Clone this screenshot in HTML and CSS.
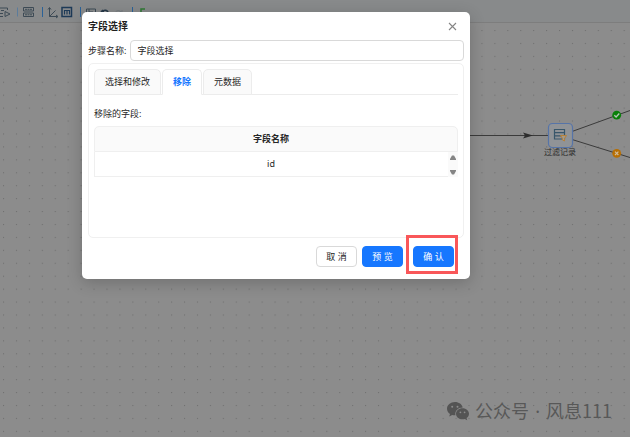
FILE: index.html
```html
<!DOCTYPE html>
<html lang="zh-CN">
<head>
<meta charset="utf-8">
<title>字段选择</title>
<link rel="stylesheet" href="styles.css">
</head>
<body>
<div class="workspace">
  <header class="toolbar" aria-hidden="true">
    <svg width="160" height="22" viewBox="0 0 160 22" fill="none" stroke="#3d4a55">
      <path d="M0 8H7.500V10M1 10.500h3M0 16.500H3M0 13.500h3M5 11.500v5l5-2.500z"/>
      <path d="M17.500 7.500v9" stroke="#5b7c9c"/>
      <path d="M23.500 7.500h10v3.500h-10zM23.500 13h10v3.500h-10z"/>
      <path d="M25 9.300h7M25 14.800h7" stroke-dasharray="2 .5"/>
      <path d="M42.500 7v10M80.500 7v10M132.500 7v10" stroke="#2b6298"/>
      <path d="M49.500 8v8.500h8M49.500 16.500l6-6M48 9.500l1.500-2 1.500 2M56 15l2 1.500-2 1.500"/>
      <path d="M62 7.500h9.500v9H62z" stroke="#1d3a57" stroke-width="1.500"/>
      <path d="M64.500 14.500v-4h5v4M67 10.500v4" stroke="#1d3a57" stroke-width="1.200"/>
      <path d="M86.500 17v-8h9v8M89 9v3h4"/>
      <path d="M101 12l2-2M101 12h3M102 12c2-3 6-2 6 1" stroke="#26394a" stroke-width="1.500"/>
      <path d="M115 13c1-3 5-3 6-1M122 10v2h-3" stroke="#747b80"/>
      <path d="M145 9h-4v5h3" stroke="#2f7a35" stroke-width="1.500"/>
    </svg>
  </header>
  <main class="canvas">
    <svg class="grid" width="100%" height="100%" aria-hidden="true">
      <defs>
        <pattern id="dots" x="3" y="7" width="12.930" height="12.930" patternUnits="userSpaceOnUse">
          <rect width="1.100" height="1.100" fill="#707070"/>
        </pattern>
      </defs>
      <rect width="100%" height="100%" fill="url(#dots)"/>
    </svg>
    <svg class="flow" width="170" height="70" viewBox="460 100 170 70" fill="none" aria-hidden="true">
      <path d="M460 135.500H548M572 131.500L630 110.500M572 139.500L630 157.500" stroke="#3b3b3b"/>
      <path d="M523 132.500l10 3-10 3 2-3z" fill="#2d2d2d"/>
      <rect x="548.500" y="123.500" width="24" height="24" rx="4" fill="#909397" stroke="#5674a8" stroke-width="1.200"/>
      <path d="M554.500 129.500h10v9.500h-10zM554.500 132.700h10M554.500 135.900h10" stroke="#38566a" stroke-width="1.200"/>
      <path d="M560.500 135.500h6l-2 3v2.500l-2-1v-1.500z" fill="#a39a8c" stroke="#b58038"/>
      <circle cx="616.700" cy="115.200" r="4.400" fill="#098009"/>
      <path d="M614.300 115.200l1.800 1.800 3.200-3.500" stroke="#b7c7b7" stroke-width="1.300"/>
      <circle cx="616.700" cy="153.300" r="4.400" fill="#b86f03"/>
      <path d="M615 151.600l3.400 3.400M618.400 151.600L615 155" stroke="#d0bb99" stroke-width="1.200"/>
    </svg>
    <span class="node-name">过滤记录</span>
    <div class="watermark">
      <svg width="24" height="20" viewBox="0 0 24 20" aria-hidden="true">
        <path fill="#545454" d="M9 1C4.500 1 1 4 1 7.700c0 2.100 1.200 4 3 5.200l-.8 2.500 3-1.500c1 .3 2 .4 3.200.4-.8-4.500 2.800-7.800 7.300-7.800C16 3.300 12.900 1 9 1z"/>
        <path fill="#545454" d="M16.500 7.200c-3.800 0-6.500 2.500-6.500 5.500s2.700 5.600 6.500 5.600c.8 0 1.600-.1 2.300-.4l2.400 1.300-.6-2.100c1.500-1 2.400-2.600 2.400-4.400 0-3-2.800-5.500-6.500-5.500z"/>
        <g fill="#8c8c8c"><circle cx="6.200" cy="5.800" r="1"/><circle cx="11.500" cy="5.800" r="1"/><circle cx="14.400" cy="11.300" r=".9"/><circle cx="18.600" cy="11.300" r=".9"/></g>
      </svg>
      <span>公众号 <span class="dot">·</span> 风息111</span>
    </div>
  </main>
</div>

<div class="overlay">
  <form class="dialog" role="dialog" aria-labelledby="dialog-title">
    <div class="dialog-head">
      <h1 id="dialog-title">字段选择</h1>
      <button type="button" class="close" aria-label="关闭">
        <svg width="9" height="9" viewBox="0 0 9 9"><path d="M1 1l7 7M8 1L1 8" stroke="#858585" stroke-width="1.100"/></svg>
      </button>
    </div>
    <div class="name-row">
      <label for="step-name">步骤名称:</label>
      <input id="step-name" type="text" value="字段选择">
    </div>
    <section class="card">
      <div class="tabs" role="tablist">
        <button type="button" role="tab" class="tab">选择和修改</button>
        <button type="button" role="tab" class="tab active" aria-selected="true">移除</button>
        <button type="button" role="tab" class="tab">元数据</button>
      </div>
      <p class="caption">移除的字段:</p>
      <div class="table-box">
        <table>
          <thead><tr><th>字段名称</th></tr></thead>
          <tbody><tr><td>id</td></tr></tbody>
        </table>
        <div class="scrollbar" aria-hidden="true">
          <svg width="6" height="5" viewBox="0 0 6 5"><path d="M0 4L2 .5h2L6 4v1H0z" fill="#858585"/></svg>
          <svg width="6" height="5" viewBox="0 0 6 5"><path d="M0 1l2 3.500h2L6 1V0H0z" fill="#858585"/></svg>
        </div>
      </div>
    </section>
    <footer class="actions">
      <button type="button" class="btn">取 消</button>
      <button type="button" class="btn primary">预 览</button>
      <span class="marked"><button type="submit" class="btn primary">确 认</button></span>
    </footer>
  </form>
</div>
</body>
</html>
```
FILE: styles.css
```css
* {
  box-sizing: border-box;
}

body {
  margin: 0;
  min-height: 100vh;
  display: grid;
  overflow: hidden;
  color: #262626;
  font: 9px/14px "Noto Sans", "Noto Sans CJK SC", sans-serif;
}

button,
input {
  font: inherit;
  color: inherit;
}

.workspace,
.overlay {
  grid-area: 1 / 1;
}

.workspace {
  display: flex;
  flex-direction: column;
  background: #8c8c8c;
}

.toolbar {
  height: 23px;
  background: #888a8b;
  border-bottom: 1px solid #7d7d7d;
}

.toolbar svg {
  display: block;
}

.canvas {
  position: relative;
  flex: 1;
}

.grid {
  position: absolute;
  inset: 0;
}

.flow {
  position: absolute;
  top: 77px;
  right: 0;
}

.node-name {
  position: absolute;
  top: 122px;
  right: 54px;
  font-size: 8px;
  color: #2b2b2b;
}

.watermark {
  position: absolute;
  right: 18px;
  bottom: 13px;
  display: flex;
  align-items: center;
  gap: 5px;
  font-family: "Noto Sans CJK SC", sans-serif;
  font-size: 18px;
  line-height: 26px;
  color: #585858;
}

.watermark .dot {
  margin: 0 2px;
  font-family: "Noto Sans", sans-serif;
}

.overlay {
  position: relative;
  padding: 12px 160px 0 82px;
}

.dialog {
  padding: 6px;
  padding-bottom: 5px;
  background: #fff;
  border-radius: 5px;
  box-shadow: 0 4px 16px rgba(0, 0, 0, 0.2);
}

.dialog-head {
  display: flex;
  align-items: center;
  justify-content: space-between;
  height: 16px;
  margin-bottom: 6px;
}

h1 {
  margin: 0;
  font-size: 10px;
  font-weight: 700;
  color: #1f1f1f;
}

.close {
  display: flex;
  padding: 0;
  margin-right: 7px;
  border: 0;
  background: none;
}

.name-row {
  display: flex;
  align-items: center;
  gap: 4px;
  margin-bottom: 2px;
}

.name-row input {
  flex: 1;
  min-width: 0;
  height: 21px;
  padding: 0 6px;
  border: 1px solid #d9d9d9;
  border-radius: 4px;
  background: #fff;
}

.card {
  min-height: 175px;
  padding: 5px;
  border: 1px solid #f0f0f0;
  border-radius: 5px;
}

.tabs {
  display: flex;
  gap: 1px;
  border-bottom: 1px solid #ececec;
}

.tab {
  height: 26px;
  padding: 0 10px;
  margin-bottom: -1px;
  border: 1px solid #ececec;
  border-radius: 5px 5px 0 0;
  background: #fafafa;
}

.tab.active {
  border-bottom-color: #fff;
  background: #fff;
  color: #1677ff;
  font-weight: 700;
}

.caption {
  margin: 12px 0 5px;
}

.table-box {
  position: relative;
}

table {
  width: 100%;
  border-collapse: separate;
  border-spacing: 0;
  text-align: center;
}

th,
td {
  height: 26px;
  padding: 0 10px 0 0;
  border: 1px solid #efefef;
}

th {
  border-radius: 5px 5px 0 0;
  background: #fafafa;
  font-weight: 700;
}

td {
  height: 25px;
  border-top: 0;
}

.scrollbar {
  position: absolute;
  right: 0;
  bottom: 0;
  width: 10px;
  height: 25px;
  padding: 3px 0 2px;
  display: flex;
  flex-direction: column;
  align-items: center;
  justify-content: space-between;
  background: #fafafa;
}

.actions {
  display: flex;
  align-items: flex-end;
  justify-content: flex-end;
  gap: 5px;
  margin: -3px 6px 0 0;
}

.btn {
  height: 21px;
  min-width: 41px;
  margin-bottom: 7px;
  padding: 0 9px;
  border: 1px solid #d9d9d9;
  border-radius: 4px;
  background: #fff;
  white-space: nowrap;
}

.btn.primary {
  border-color: #1677ff;
  background: #1677ff;
  color: #fff;
}

.marked {
  display: flex;
  margin-left: -2px;
  padding: 8px 1px 4px 4px;
  border: 3px solid #f95759;
}

.marked .btn {
  margin-bottom: 0;
}
```
